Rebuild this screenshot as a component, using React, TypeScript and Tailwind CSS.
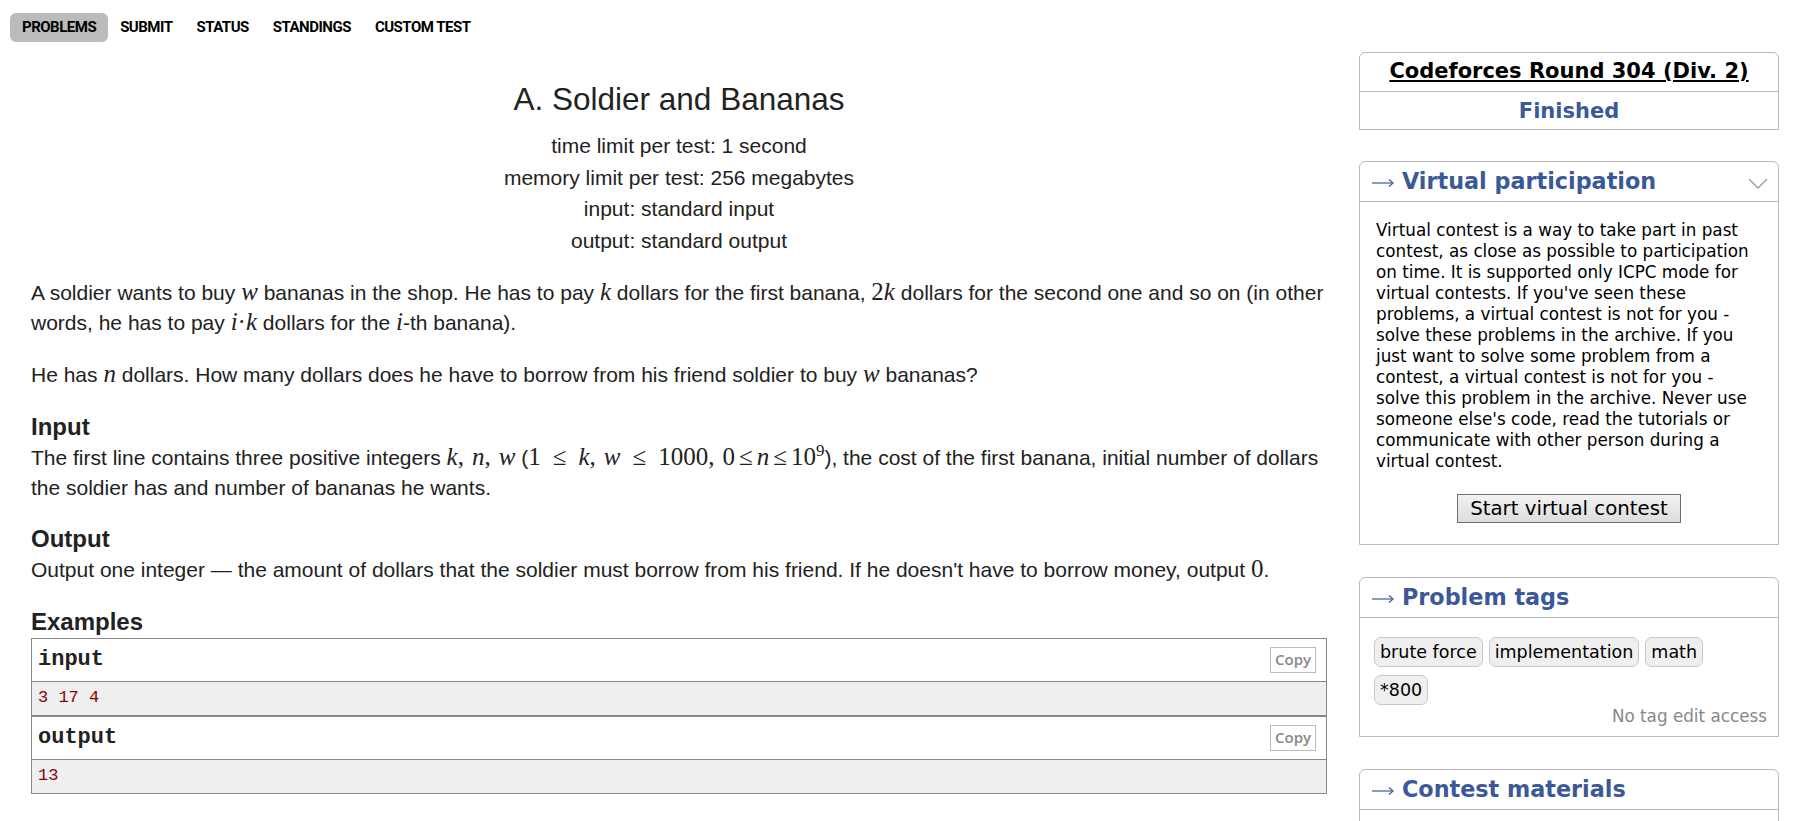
import React from "react";

const M = ({ children }: { children: React.ReactNode }) => (
  <span className="font-['Liberation_Serif',serif] text-[25px] leading-none">{children}</span>
);
const I = ({ children }: { children: React.ReactNode }) => <i className="italic">{children}</i>;
const Sp = () => <span className="inline-block w-[8px]" />;
const Rel = ({ wide }: { wide?: boolean }) => (
  <span className={wide ? "mx-[12px]" : "mx-[4px]"}>≤</span>
);

function Arrow() {
  return (
    <svg width="22" height="10" viewBox="0 0 22 10" className="mr-[8px] mt-[3px]">
      <line x1="0" y1="5" x2="21" y2="5" stroke="#3b5998" strokeWidth="1.2" />
      <polyline points="17,1.5 21,5 17,8.5" fill="none" stroke="#3b5998" strokeWidth="1.2" />
    </svg>
  );
}

function BoxHeader({ title, chevron }: { title: string; chevron?: boolean }) {
  return (
    <div className="h-[40px] flex items-center justify-between border-b border-[#b9b9b9] pl-[12px] pr-[10px]">
      <div className="flex items-center text-[#3b5998]">
        <Arrow />
        <span className="text-[22.3px] font-bold">{title}</span>
      </div>
      {chevron && (
        <svg width="20" height="11" viewBox="0 0 20 11" className="mt-[4px]">
          <polyline points="1,1 10,10 19,1" fill="none" stroke="#9a9a9a" strokeWidth="1.3" />
        </svg>
      )}
    </div>
  );
}

function Sample({ label, value }: { label: string; value: string }) {
  return (
    <div className="border border-[#888]">
      <div className="h-[43px] flex items-center justify-between pl-[6px] pr-[10px] border-b border-[#888] bg-white">
        <span className="font-['Liberation_Mono',monospace] font-bold text-[22px] text-[#222]">{label}</span>
        <span className="border border-[#bbb] px-[4px] h-[26px] flex items-center text-[15px] font-semibold text-[#888] font-['Open_Sans',sans-serif]">
          Copy
        </span>
      </div>
      <div className="h-[33px] flex items-center pl-[6px] bg-[#efefef] font-['Liberation_Mono',monospace] text-[17px] text-[#8b0000]">
        {value}
      </div>
    </div>
  );
}

const tags = ["brute force", "implementation", "math", "*800"];

export default function App() {
  return (
    <div className="w-[1798px] min-h-[821px] bg-white">
      <nav className="flex pl-[10px] pt-[13px] font-['Roboto',sans-serif] font-bold text-[15px] tracking-[-0.5px] text-black">
        <span className="px-[12px] h-[29px] flex items-center rounded-[6px] bg-[#bbbbbb]">PROBLEMS</span>
        <span className="px-[12px] h-[29px] flex items-center">SUBMIT</span>
        <span className="px-[12px] h-[29px] flex items-center">STATUS</span>
        <span className="px-[12px] h-[29px] flex items-center">STANDINGS</span>
        <span className="px-[12px] h-[29px] flex items-center">CUSTOM TEST</span>
      </nav>

      <div className="flex gap-[32px] pl-[31px] pr-[19px] mt-[10px]">
        <main className="flex-1 min-w-0 pt-[28px] text-[21px] text-[#222] font-['Liberation_Sans',Arial,sans-serif]">
          <div className="text-center">
            <div className="text-[31.5px] leading-[38px]">A. Soldier and Bananas</div>
            <div className="mt-[12px] leading-[31.5px]">
              <div>time limit per test: 1 second</div>
              <div>memory limit per test: 256 megabytes</div>
              <div>input: standard input</div>
              <div>output: standard output</div>
            </div>
          </div>

          <p className="mt-[21.7px] mb-[22.5px] leading-[30px]">
            A soldier wants to buy{" "}
            <M>
              <I>w</I>
            </M>{" "}
            bananas in the shop. He has to pay{" "}
            <M>
              <I>k</I>
            </M>{" "}
            dollars for the first banana,{" "}
            <M>
              2<I>k</I>
            </M>{" "}
            dollars for the second one and so on (in other words, he has to pay{" "}
            <M>
              <I>i</I>·<I>k</I>
            </M>{" "}
            dollars for the{" "}
            <M>
              <I>i</I>
            </M>
            -th banana).
          </p>
          <p className="mb-[22.5px] leading-[30px]">
            He has{" "}
            <M>
              <I>n</I>
            </M>{" "}
            dollars. How many dollars does he have to borrow from his friend soldier to buy{" "}
            <M>
              <I>w</I>
            </M>{" "}
            bananas?
          </p>

          <div className="text-[24px] font-bold leading-[27px] mb-[3px]">Input</div>
          <p className="mb-[22.5px] leading-[30px]">
            The first line contains three positive integers{" "}
            <M>
              <I>k</I>,<Sp />
              <I>n</I>,<Sp />
              <I>w</I>
            </M>{" "}
            (
            <M>
              1<Rel wide />
              <I>k</I>,<Sp />
              <I>w</I>
              <Rel wide />
              1000,<Sp />0<Rel />
              <I>n</I>
              <Rel />
              10<sup className="text-[17px]">9</sup>
            </M>
            ), the cost of the first banana, initial number of dollars
            <br />
            the soldier has and number of bananas he wants.
          </p>

          <div className="text-[24px] font-bold leading-[27px] mb-[3px]">Output</div>
          <p className="mb-[22.5px] leading-[30px]">
            Output one integer — the amount of dollars that the soldier must borrow from his friend. If he doesn't have to borrow money, output{" "}
            <M>0</M>.
          </p>

          <div className="text-[24px] font-bold leading-[27px] mb-[3px]">Examples</div>
          <div>
            <Sample label="input" value="3 17 4" />
            <Sample label="output" value="13" />
          </div>
        </main>

        <aside className="w-[420px] shrink-0 font-['DejaVu_Sans',Verdana,sans-serif] text-[16.8px] text-[#222]">
          <div className="border border-[#b9b9b9] rounded-t-[6px] text-center font-bold text-[21px]">
            <div className="h-[39px] flex items-center justify-center border-b border-[#b9b9b9]">
              <span className="underline text-black">Codeforces Round 304 (Div. 2)</span>
            </div>
            <div className="h-[37px] flex items-center justify-center text-[#3b5998] pt-[2px]">Finished</div>
          </div>

          <div className="mt-[31px] border border-[#b9b9b9] rounded-t-[6px]">
            <BoxHeader title="Virtual participation" chevron />
            <div className="pt-[18px] pb-[21px] pl-[16px] pr-[24px]">
              <div className="leading-[21px] text-black">
                Virtual contest is a way to take part in past contest, as close as possible to participation on time. It is supported only ICPC
                mode for virtual contests. If you've seen these problems, a virtual contest is not for you - solve these problems in the archive.
                If you just want to solve some problem from a contest, a virtual contest is not for you - solve this problem in the archive.
                Never use someone else's code, read the tutorials or communicate with other person during a virtual contest.
              </div>
              <div className="flex justify-center mt-[22px] pl-[8px]">
                <span className="h-[29px] px-[12px] flex items-center border border-[#707070] bg-gradient-to-b from-[#f2f2f2] to-[#dddddd] text-[19.8px] text-black">
                  Start virtual contest
                </span>
              </div>
            </div>
          </div>

          <div className="mt-[32px] border border-[#b9b9b9] rounded-t-[6px]">
            <BoxHeader title="Problem tags" />
            <div className="pt-[19px] pb-[9px] pl-[14px] pr-[11px]">
              <div className="flex flex-wrap gap-x-[6px] gap-y-[8px] w-[345px]">
                {tags.map((t) => (
                  <span
                    key={t}
                    className="h-[30px] px-[5px] flex items-center rounded-[7px] border border-[#c7c7c7] bg-[#efefef] text-black text-[17.5px]"
                  >
                    {t}
                  </span>
                ))}
              </div>
              <div className="mt-[1px] text-right text-[#888] leading-[21px]">No tag edit access</div>
            </div>
          </div>

          <div className="mt-[32px] border border-[#b9b9b9] rounded-t-[6px] h-[80px]">
            <BoxHeader title="Contest materials" />
          </div>
        </aside>
      </div>
    </div>
  );
}
